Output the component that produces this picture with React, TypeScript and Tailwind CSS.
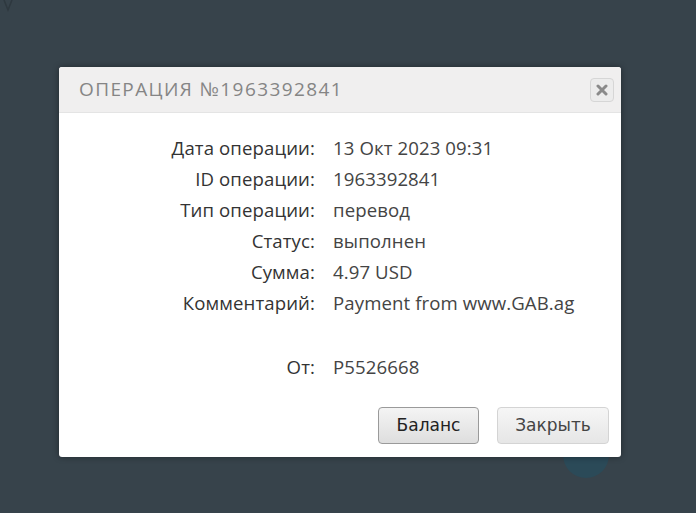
const rows: [string, string][] = [
  ["Дата операции:", "13 Окт 2023 09:31"],
  ["ID операции:", "1963392841"],
  ["Тип операции:", "перевод"],
  ["Статус:", "выполнен"],
  ["Сумма:", "4.97 USD"],
  ["Комментарий:", "Payment from www.GAB.ag"],
];

export default function App() {
  return (
    <div className="relative h-[513px] w-[696px] overflow-hidden bg-[#37434b] font-['Open_Sans',sans-serif]">
      <svg className="absolute left-[3px] top-0" width="10" height="12" viewBox="0 0 10 12">
        <path d="M1 0 L5 10 L9 0" stroke="#2e383f" strokeWidth="1.5" fill="none" />
      </svg>
      <div className="absolute left-[563px] top-[432px] h-[46px] w-[46px] rounded-full bg-[#2b4a58]" />

      <div className="absolute left-[59px] top-[67px] flex h-[390px] w-[562px] flex-col overflow-hidden rounded-[3px] bg-white shadow-[0_0_6px_rgba(0,0,0,0.4)]">
        <div className="flex h-[46px] items-center justify-between border-b border-[#e4e4e4] bg-[#f0efef] pl-[20px] pr-[7px]">
          <span className="text-[19px] tracking-[1.4px] text-[#858585]">
            ОПЕРАЦИЯ №1963392841
          </span>
          <button className="flex h-[24px] w-[24px] items-center justify-center rounded-[4px] border border-[#d6d6d6] bg-[#ececec]">
            <svg width="12" height="12" viewBox="0 0 12 12">
              <path
                d="M2 2 L10 10 M10 2 L2 10"
                stroke="#8a8a8a"
                strokeWidth="3"
                strokeLinecap="round"
              />
            </svg>
          </button>
        </div>

        <div className="flex flex-col pt-[19px] text-[18.6px] tracking-[0.1px]">
          {rows.map(([label, value], i) => (
            <div key={i} className="flex h-[31px] items-center gap-[18px]">
              <span className="w-[256px] text-right text-[#333]">{label}</span>
              <span className="text-[#444]">{value}</span>
            </div>
          ))}
          <div className="mt-[33px] flex h-[31px] items-center gap-[18px]">
            <span className="w-[256px] text-right text-[#333]">От:</span>
            <span className="text-[#444]">P5526668</span>
          </div>
        </div>

        <div className="mt-auto flex justify-end gap-[18px] pb-[13px] pr-[12px]">
          <button className="h-[37px] w-[101px] rounded-[4px] border border-[#9a9a9a] bg-gradient-to-b from-[#f4f4f4] to-[#dedede] font-['DejaVu_Sans',sans-serif] text-[17px] text-[#222]">
            Баланс
          </button>
          <button className="h-[37px] w-[112px] rounded-[4px] border border-[#d4d4d4] bg-gradient-to-b from-[#f6f6f6] to-[#e6e6e6] font-['DejaVu_Sans',sans-serif] text-[17px] text-[#444]">
            Закрыть
          </button>
        </div>
      </div>
    </div>
  );
}
